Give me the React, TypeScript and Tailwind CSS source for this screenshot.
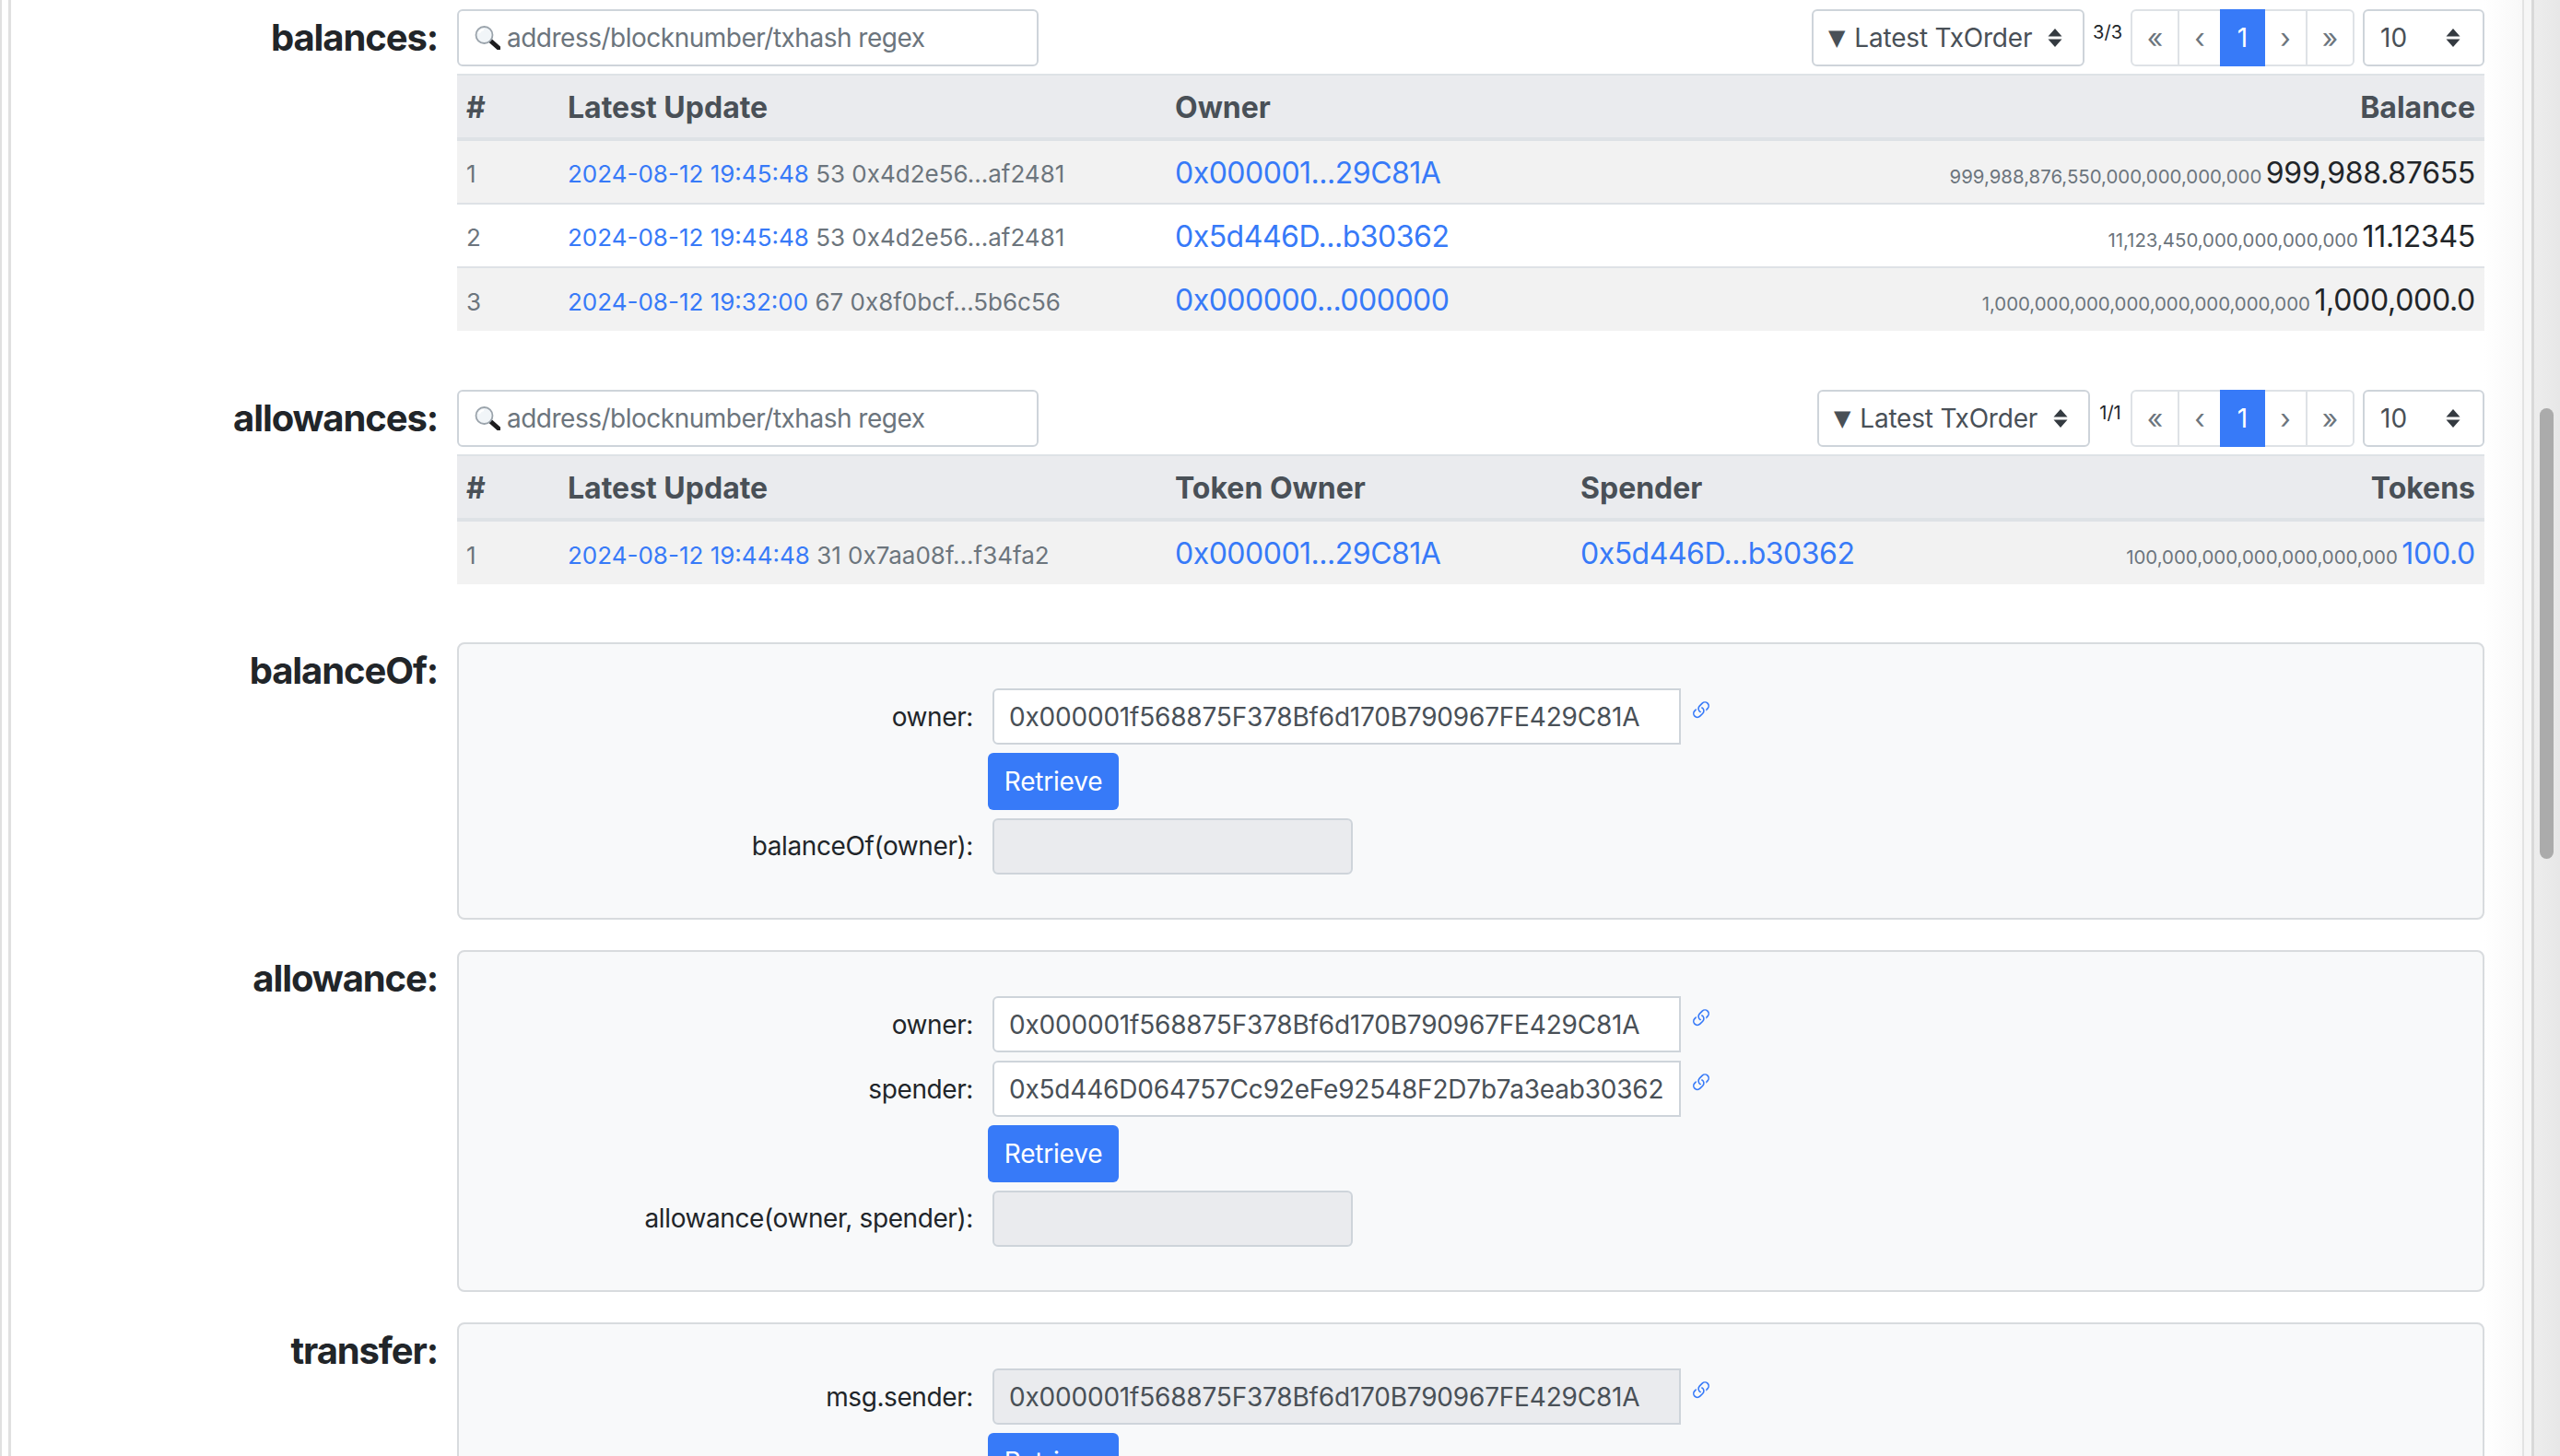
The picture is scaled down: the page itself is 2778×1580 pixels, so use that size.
import { BsLink45Deg } from 'react-icons/bs';

const link = 'text-[#377af8]';

function SortIcon() {
  return (
    <svg width="16" height="20" viewBox="0 0 16 20" className="shrink-0 text-[#343a40]">
      <path d="M8 0 L15.5 8.5 H0.5 Z M8 20 L15.5 11.5 H0.5 Z" fill="currentColor" />
    </svg>
  );
}

function SearchEmoji() {
  return (
    <svg width="28" height="26" viewBox="0 0 28 26" className="shrink-0">
      <path d="M17 16 L26 24" stroke="#1c1c1e" strokeWidth="5" strokeLinecap="round" />
      <circle cx="10.5" cy="10" r="9" fill="#f1f5f8" stroke="#9aa3ab" strokeWidth="1.8" />
      <path d="M5 8 A6.5 6.5 0 0 1 10 4" stroke="#ffffff" strokeWidth="2" fill="none" />
    </svg>
  );
}

function Toolbar({ pages }: { pages: string }) {
  return (
    <div className="flex h-[62px] items-stretch">
      <div className="flex w-[631px] items-center gap-[7px] rounded-[6px] border-2 border-[#ced4da] bg-white pl-[17px]">
        <SearchEmoji />
        <span className="text-[28px] tracking-[-0.5px] text-[#6c757d]">address/blocknumber/txhash regex</span>
      </div>
      <div className="ml-auto flex items-stretch">
        <div className="flex w-[296px] items-center rounded-[6px] border-2 border-[#ced4da] bg-white pl-[16px] pr-[22px] text-[28px] tracking-[-0.2px] text-[#495057]">
          <span className="mr-[10px] font-['DejaVu_Sans'] text-[24px]">▼</span>
          <span>Latest TxOrder</span>
          <span className="ml-auto"><SortIcon /></span>
        </div>
        <div className="mx-[9px] min-w-[26px] pt-[10px] text-center text-[20px] leading-[30px] text-[#212529]">{pages}</div>
        <div className="flex rounded-[6px] border-2 border-[#dee2e6] bg-white text-[30px] text-[#6c757d]">
          <span className="flex w-[51px] items-center justify-center border-r-2 border-[#dee2e6]">«</span>
          <span className="flex w-[44px] items-center justify-center">‹</span>
          <span className="-my-[2px] flex w-[49px] items-center justify-center bg-[#377af8] text-[28px] text-white">1</span>
          <span className="flex w-[46px] items-center justify-center border-r-2 border-[#dee2e6]">›</span>
          <span className="flex w-[49px] items-center justify-center">»</span>
        </div>
        <div className="ml-[9px] flex w-[132px] items-center justify-between rounded-[6px] border-2 border-[#ced4da] bg-white pl-[17px] pr-[24px] text-[28px] text-[#495057]">
          <span>10</span>
          <SortIcon />
        </div>
      </div>
    </div>
  );
}

function Addr({ children }: { children: string }) {
  return <a className={`text-[32px] tracking-[-0.5px] ${link}`}>{children}</a>;
}

function Updated({ at, block, tx }: { at: string; block: string; tx: string }) {
  return (
    <span className="inline-block pt-[2px] text-[26px] text-[#6c757d]">
      <a className={link}>{at}</a> {block} {tx}
    </span>
  );
}

function RowNumber({ children }: { children: string }) {
  return <span className="inline-block pt-[2px] text-[26px] text-[#6c757d]">{children}</span>;
}

function Amount({ raw, value, isLink }: { raw: string; value: string; isLink?: boolean }) {
  return (
    <>
      <span className="text-[20.4px] text-[#6c757d]">{raw}</span>{' '}
      <span className={`text-[32px] tracking-[-0.3px] ${isLink ? link : 'text-[#212529]'}`}>{value}</span>
    </>
  );
}

function HeadCell({ children, right }: { children?: string; right?: boolean }) {
  return (
    <th className={`h-[73px] border-t-2 border-b-4 border-[#dee2e6] bg-[#eaebee] px-[10px] pt-[2px] text-[32px] font-bold text-[#495057] ${right ? 'text-right' : 'text-left'}`}>
      {children}
    </th>
  );
}

function Cell({ children, striped, last, right }: { children?: React.ReactNode; striped?: boolean; last?: boolean; right?: boolean }) {
  return (
    <td className={`px-[10px] pt-[2px] align-middle whitespace-nowrap ${last ? 'h-[68px]' : 'h-[69px] border-b-2 border-[#dee2e6]'} ${striped ? 'bg-[#f2f2f2]' : 'bg-white'} ${right ? 'text-right' : ''}`}>
      {children}
    </td>
  );
}

function Section({ title, children }: { title: string; children: React.ReactNode }) {
  return (
    <section className="flex">
      <h4 className="w-[463px] shrink-0 pt-[7px] text-right text-[40px] leading-[48px] font-bold tracking-[-1.1px] text-[#212529]">{title}</h4>
      <div className="ml-[21px] w-[2200px]">{children}</div>
    </section>
  );
}

function FormRow({ label, value, disabled, short }: { label: string; value?: string; disabled?: boolean; short?: boolean }) {
  return (
    <div className="flex h-[61px]">
      <label className={`w-[558px] text-right text-[28px] tracking-[-0.4px] text-[#212529] ${short ? 'leading-[61px]' : 'leading-[63px]'}`}>{label}</label>
      <div className={`ml-[21px] flex items-center border-2 border-[#ced4da] pl-[16px] pt-[1px] text-[28px] tracking-[-0.2px] text-[#495057] ${short ? 'w-[391px] rounded-[6px]' : 'w-[747px] rounded-l-[6px]'} ${disabled || short ? 'bg-[#eaebee]' : 'bg-white'}`}>
        {value}
      </div>
      {value && <BsLink45Deg className={`ml-[9px] mt-[11px] text-[26px] ${link}`} />}
    </div>
  );
}

function RetrieveButton() {
  return (
    <div className="pl-[574px]">
      <button className="h-[62px] w-[142px] rounded-[6px] bg-[#377af8] text-[28px] tracking-[-0.2px] text-white">Retrieve</button>
    </div>
  );
}

function Panel({ children }: { children: React.ReactNode }) {
  return <div className="flex flex-col gap-[9px] rounded-[8px] border-2 border-[#d8dbde] bg-[#f8f9fa] pt-[48px] pb-[47px]">{children}</div>;
}

export default function App() {
  return (
    <div className="flex h-[1580px] w-[2778px] overflow-hidden bg-white font-['Inter',sans-serif]">
      {/* left edge of the window */}
      <div className="w-[12px] shrink-0 border-r-[3px] border-l-2 border-[#e0e0e0] bg-white" />

      <main className="flex w-[2684px] shrink-0 flex-col pt-[10px]">
        <Section title="balances:">
          <Toolbar pages="3/3" />
          <table className="mt-[8px] w-full table-fixed border-separate border-spacing-0">
            <colgroup>
              <col className="w-[110px]" />
              <col className="w-[659px]" />
              <col className="w-[600px]" />
              <col />
            </colgroup>
            <thead>
              <tr>
                <HeadCell>#</HeadCell>
                <HeadCell>Latest Update</HeadCell>
                <HeadCell>Owner</HeadCell>
                <HeadCell right>Balance</HeadCell>
              </tr>
            </thead>
            <tbody>
              <tr>
                <Cell striped><RowNumber>1</RowNumber></Cell>
                <Cell striped><Updated at="2024-08-12 19:45:48" block="53" tx="0x4d2e56...af2481" /></Cell>
                <Cell striped><Addr>0x000001...29C81A</Addr></Cell>
                <Cell striped right><Amount raw="999,988,876,550,000,000,000,000" value="999,988.87655" /></Cell>
              </tr>
              <tr>
                <Cell><RowNumber>2</RowNumber></Cell>
                <Cell><Updated at="2024-08-12 19:45:48" block="53" tx="0x4d2e56...af2481" /></Cell>
                <Cell><Addr>0x5d446D...b30362</Addr></Cell>
                <Cell right><Amount raw="11,123,450,000,000,000,000" value="11.12345" /></Cell>
              </tr>
              <tr>
                <Cell striped last><RowNumber>3</RowNumber></Cell>
                <Cell striped last><Updated at="2024-08-12 19:32:00" block="67" tx="0x8f0bcf...5b6c56" /></Cell>
                <Cell striped last><Addr>0x000000...000000</Addr></Cell>
                <Cell striped last right><Amount raw="1,000,000,000,000,000,000,000,000" value="1,000,000.0" /></Cell>
              </tr>
            </tbody>
          </table>
        </Section>

        <div className="mt-[64px]">
          <Section title="allowances:">
            <Toolbar pages="1/1" />
            <table className="mt-[8px] w-full table-fixed border-separate border-spacing-0">
              <colgroup>
                <col className="w-[110px]" />
                <col className="w-[659px]" />
                <col className="w-[440px]" />
                <col className="w-[500px]" />
                <col />
              </colgroup>
              <thead>
                <tr>
                  <HeadCell>#</HeadCell>
                  <HeadCell>Latest Update</HeadCell>
                  <HeadCell>Token Owner</HeadCell>
                  <HeadCell>Spender</HeadCell>
                  <HeadCell right>Tokens</HeadCell>
                </tr>
              </thead>
              <tbody>
                <tr>
                  <Cell striped last><RowNumber>1</RowNumber></Cell>
                  <Cell striped last><Updated at="2024-08-12 19:44:48" block="31" tx="0x7aa08f...f34fa2" /></Cell>
                  <Cell striped last><Addr>0x000001...29C81A</Addr></Cell>
                  <Cell striped last><Addr>0x5d446D...b30362</Addr></Cell>
                  <Cell striped last right><Amount raw="100,000,000,000,000,000,000" value="100.0" isLink /></Cell>
                </tr>
              </tbody>
            </table>
          </Section>
        </div>

        <div className="mt-[63px]">
          <Section title="balanceOf:">
            <Panel>
              <FormRow label="owner:" value="0x000001f568875F378Bf6d170B790967FE429C81A" />
              <RetrieveButton />
              <FormRow label="balanceOf(owner):" short />
            </Panel>
          </Section>
        </div>

        <div className="mt-[33px]">
          <Section title="allowance:">
            <Panel>
              <FormRow label="owner:" value="0x000001f568875F378Bf6d170B790967FE429C81A" />
              <FormRow label="spender:" value="0x5d446D064757Cc92eFe92548F2D7b7a3eab30362" />
              <RetrieveButton />
              <FormRow label="allowance(owner, spender):" short />
            </Panel>
          </Section>
        </div>

        <div className="mt-[33px]">
          <Section title="transfer:">
            <Panel>
              <FormRow label="msg.sender:" value="0x000001f568875F378Bf6d170B790967FE429C81A" disabled />
              <RetrieveButton />
            </Panel>
          </Section>
        </div>
      </main>

      {/* window edge and scrollbar */}
      <div className="w-[41px] shrink-0 bg-gradient-to-r from-white to-[#f8f8f8]" />
      <div className="w-[10px] shrink-0 border-l-2 border-[#e3e3e3] bg-[#f6f6f6]" />
      <div className="flex-1 border-l-[3px] border-[#d9d9d9] bg-gradient-to-r from-[#ededed] to-[#e7e7e7] pl-[6px] pt-[443px]">
        <div className="h-[489px] w-[15px] rounded-full bg-[#ababab]" />
      </div>
    </div>
  );
}
